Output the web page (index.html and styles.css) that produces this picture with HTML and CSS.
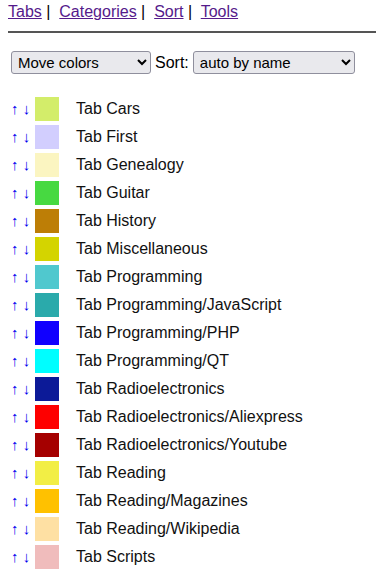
FILE: index.html
```html
<!DOCTYPE html>
<html lang="en">
<head>
    <meta charset="UTF-8">
    <meta name="viewport" content="width=device-width, initial-scale=1.0">
    <title>Tabs</title>
    <link rel="stylesheet" href="styles.css">
</head>
<body>
    <div class="menu">
        <a href="#tabs">Tabs</a> |&nbsp; <a href="#categories">Categories</a> |&nbsp; <a href="#sort">Sort</a> |&nbsp; <a href="#tools">Tools</a>
    </div>
    <hr class="rule">

    <div class="controls">
        <select class="select mode-select">
            <option>Move colors</option>
        </select>
        <span class="label">Sort:</span>
        <select class="select sort-select">
            <option>auto by name</option>
        </select>
    </div>

    <div class="tab-list" id="tabList"></div>

    <script>
        const tabs = [
            ['Cars', '#d3ed6a'],
            ['First', '#d2cefe'],
            ['Genealogy', '#fbf5c1'],
            ['Guitar', '#47d941'],
            ['History', '#bd7e06'],
            ['Miscellaneous', '#d4d400'],
            ['Programming', '#50c8ce'],
            ['Programming/JavaScript', '#2aaaab'],
            ['Programming/PHP', '#1000ff'],
            ['Programming/QT', '#00feff'],
            ['Radioelectronics', '#0c1a98'],
            ['Radioelectronics/Aliexpress', '#fe0000'],
            ['Radioelectronics/Youtube', '#a50000'],
            ['Reading', '#f2ee45'],
            ['Reading/Magazines', '#ffc100'],
            ['Reading/Wikipedia', '#fee0a3'],
            ['Scripts', '#f0bcbc']
        ];

        const list = document.getElementById('tabList');
        tabs.forEach(([name, color]) => {
            const row = document.createElement('div');
            row.className = 'tab-row';
            row.innerHTML = `
                <span class="arrows"><a href="#">↑</a> <a href="#">↓</a></span>
                <span class="swatch" style="background: ${color}"></span>
                <span class="tab-name">Tab ${name}</span>`;
            list.appendChild(row);
        });
    </script>
</body>
</html>
```

FILE: styles.css
```css
* {
    box-sizing: border-box;
}

body {
    margin: 0;
    padding: 0 0 0 8px;
    font-family: "Liberation Sans", Arial, sans-serif;
    font-size: 16px;
    color: #000;
    background: #fff;
}

.menu {
    padding-top: 3px;
    line-height: 18px;
}

.menu a {
    color: #551a8b;
}

.rule {
    margin: 10px 0 0 0;
    border: none;
    border-top: 2px solid #555;
    height: 0;
}

.controls {
    display: flex;
    align-items: center;
    gap: 4px;
    margin-top: 18px;
    padding-left: 3px;
}

.select {
    height: 23px;
    font-family: "Liberation Sans", Arial, sans-serif;
    font-size: 15px;
    padding: 0 2px;
    border: 1px solid #8f8f9d;
    border-radius: 3px;
    background: #e9e9ed;
    color: #000;
}

.mode-select {
    width: 140px;
}

.sort-select {
    width: 162px;
}

.label {
    font-size: 16px;
}

.tab-list {
    margin-top: 23px;
}

.tab-row {
    display: flex;
    align-items: center;
    height: 24px;
    margin-bottom: 4px;
}

.arrows {
    width: 27px;
    padding-left: 3px;
    font-size: 15px;
    line-height: 24px;
}

.arrows a {
    color: #0000ee;
    text-decoration: none;
}

.swatch {
    width: 24px;
    height: 24px;
}

.tab-name {
    margin-left: 17px;
    color: #111;
}
```
